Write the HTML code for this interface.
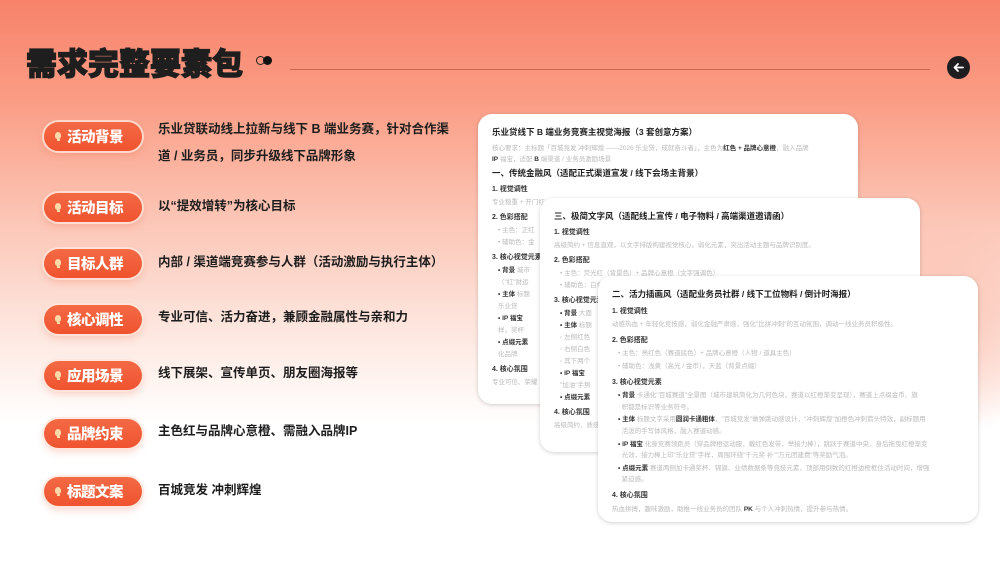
<!DOCTYPE html>
<html><head><meta charset="utf-8"><style>
*{margin:0;padding:0;box-sizing:border-box}
body{width:1000px;height:565px;overflow:hidden;position:relative;font-family:"Liberation Sans","Noto Sans CJK SC",sans-serif;
background:linear-gradient(180deg,#f8826a 0%,#fa9d85 18%,#fcc4b4 38%,#fde6de 58%,#fff 75%,#fff 100%);}
.glow{position:absolute;right:-60px;top:220px;width:260px;height:220px;background:radial-gradient(closest-side,rgba(250,170,150,.6),rgba(255,255,255,0));}
h1{position:absolute;left:26px;top:44px;font-size:31px;font-weight:900;color:#1e1e1e;letter-spacing:0;font-family:"Noto Sans CJK SC",sans-serif;line-height:36px;-webkit-text-stroke:1.2px #1e1e1e}
.dots{position:absolute;left:256px;top:56px;}
.dots i{position:absolute;width:9px;height:9px;border-radius:50%;top:0}
.line{position:absolute;left:290px;top:69px;width:640px;height:1px;background:#c9664f}
.back{position:absolute;left:947px;top:56px;width:23px;height:23px;border-radius:50%;background:#1d1d1f}
.pill{position:absolute;left:44px;width:98px;height:29px;border-radius:15px;background:linear-gradient(180deg,#f36a45,#f0532f);color:#fff;font-weight:900;font-size:14.5px;line-height:29px;padding-left:23px;box-shadow:0 0 0 2px rgba(255,230,220,.8),0 4px 8px rgba(240,90,60,.25);font-family:"Noto Sans CJK SC",sans-serif;letter-spacing:-.5px}
.pill:before{content:"";position:absolute;left:11px;top:10px;width:6px;height:7px;border-radius:50% 50% 40% 40%;background:#ffd9a8}
.pill:after{content:"";position:absolute;left:12.5px;top:17px;width:3px;height:2px;background:#ffd9a8}
.txt{position:absolute;left:158px;font-size:12.5px;font-weight:700;color:#1d1d1d;line-height:27px}
.card{position:absolute;background:#fff;border-radius:14px;box-shadow:0 1px 4px rgba(0,0,0,.18);padding:10px 14px;font-size:6.5px;color:#bbb;line-height:11px;overflow:hidden}
.card b{color:#333}
.card .t{color:#222;font-weight:700;font-size:8.5px;margin:3px 0 5px}
.card .h{color:#333;font-weight:700;font-size:7px;margin:4px 0 2px}
.card p{margin:0 0 1px 6px}
.c3{line-height:11.6px}
</style></head><body>
<div class="glow"></div>
<h1>需求完整要素包</h1>
<div class="dots"><i style="left:0;border:1.5px solid #222;background:transparent"></i><i style="left:7px;background:#111"></i></div>
<div class="line"></div>
<div class="back"><svg width="23" height="23" viewBox="0 0 23 23"><path d="M16 11.5H7.5M11 8l-3.5 3.5L11 15" stroke="#fff" stroke-width="1.8" fill="none" stroke-linecap="round" stroke-linejoin="round"/></svg></div>

<div class="pill" style="top:122px">活动背景</div>
<div class="txt" style="top:116px">乐业贷联动线上拉新与线下 B 端业务赛，针对合作渠<br>道 / 业务员，同步升级线下品牌形象</div>
<div class="pill" style="top:193px">活动目标</div>
<div class="txt" style="top:193px">以“提效增转”为核心目标</div>
<div class="pill" style="top:249px">目标人群</div>
<div class="txt" style="top:249px">内部 / 渠道端竞赛参与人群（活动激励与执行主体）</div>
<div class="pill" style="top:305px">核心调性</div>
<div class="txt" style="top:304px">专业可信、活力奋进，兼顾金融属性与亲和力</div>
<div class="pill" style="top:361px">应用场景</div>
<div class="txt" style="top:360px">线下展架、宣传单页、朋友圈海报等</div>
<div class="pill" style="top:419px">品牌约束</div>
<div class="txt" style="top:418px">主色红与品牌心意橙、需融入品牌IP</div>
<div class="pill" style="top:477px">标题文案</div>
<div class="txt" style="top:477px">百城竞发 冲刺辉煌</div>

<div class="card" style="left:478px;top:114px;width:380px;height:290px">
<div class="t">乐业贷线下 B 端业务竞赛主视觉海报（3 套创意方案）</div>
<div>核心要求：主标题「百城竞发 冲刺辉煌 ——2026 乐业贷，成就奋斗者」，主色为<b>红色 + 品牌心意橙</b>，融入品牌<br><b>IP</b> 福宝，适配 <b>B</b> 端渠道 / 业务员激励场景</div>
<div class="t">一、传统金融风（适配正式渠道宣发 / 线下会场主背景）</div>
<div class="h">1. 视觉调性</div><div>专业稳重 + 开门红</div>
<div class="h">2. 色彩搭配</div><p>• 主色：正红</p><p>• 辅助色：金</p>
<div class="h">3. 核心视觉元素</div><p><b>• 背景</b> 城市</p><p>（"红"财运</p><p><b>• 主体</b> 标题</p><p>乐业贷</p><p><b>• IP 福宝</b></p><p>样，奖杯</p><p><b>• 点缀元素</b></p><p>化品牌</p>
<div class="h">4. 核心氛围</div><div>专业可信、荣耀</div>
</div>

<div class="card" style="left:540px;top:198px;width:380px;height:254px">
<div class="t">三、极简文字风（适配线上宣传 / 电子物料 / 高端渠道邀请函）</div>
<div class="h">1. 视觉调性</div><div>高级简约 + 信息直观，以文字排版构建视觉核心，弱化元素，突出活动主题与品牌识别度。</div>
<div class="h">2. 色彩搭配</div><p>• 主色：荧光红（背景色）+ 品牌心意橙（文字强调色）</p><p>• 辅助色：白色</p>
<div class="h">3. 核心视觉元素</div><p><b>• 背景</b> 大面</p><p><b>• 主体</b> 标题</p><p>◦ 左侧红色</p><p>◦ 右侧白色</p><p>◦ 其下两个</p><p><b>• IP 福宝</b></p><p>"加油"手势</p><p><b>• 点缀元素</b></p>
<div class="h">4. 核心氛围</div><div>高级简约、质感</div>
</div>

<div class="card c3" style="left:598px;top:276px;width:380px;height:246px">
<div class="t">二、活力插画风（适配业务员社群 / 线下工位物料 / 倒计时海报）</div>
<div class="h">1. 视觉调性</div><div>动感热血 + 年轻化竞技感，弱化金融严肃感，强化"比拼冲刺"的互动氛围，调动一线业务员积极性。</div>
<div class="h">2. 色彩搭配</div><p>• 主色：亮红色（赛道底色）+ 品牌心意橙（人物 / 道具主色）</p><p>• 辅助色：浅黄（高光 / 金币），天蓝（背景点缀）</p>
<div class="h">3. 核心视觉元素</div>
<p><b>• 背景</b> 卡通化"百城赛道"全景图（城市建筑简化为几何色块，赛道以红橙渐变呈现），赛道上点缀金币、旗<br>&nbsp;&nbsp;帜都是标识等业务符号。</p>
<p><b>• 主体</b> 标题文字采用<b>圆润卡通粗体</b>，"百城竞发"做弹跳动感设计，"冲刺辉煌"加橙色冲刺箭头特效，副标题用<br>&nbsp;&nbsp;活泼的手写体风格，融入赛道动感。</p>
<p><b>• IP 福宝</b> 化身竞赛领跑员（穿品牌橙运动服，戴红色发带，举接力棒），跳跃于赛道中央，身后拖曳红橙渐变<br>&nbsp;&nbsp;光效，接力棒上印"乐业贷"字样，周围环绕"千元奖 补""万元团建费"等奖励气泡。</p>
<p><b>• 点缀元素</b> 赛道两侧加卡通奖杯、锦旗、业绩数据条等竞技元素，顶部用倒数的红橙边框框住活动时间，增强<br>&nbsp;&nbsp;紧迫感。</p>
<div class="h">4. 核心氛围</div><div>热血拼搏，趣味激励，助推一线业务员的团队 <b>PK</b> 与个人冲刺热情，提升参与热情。</div>
</div>
</body></html>
